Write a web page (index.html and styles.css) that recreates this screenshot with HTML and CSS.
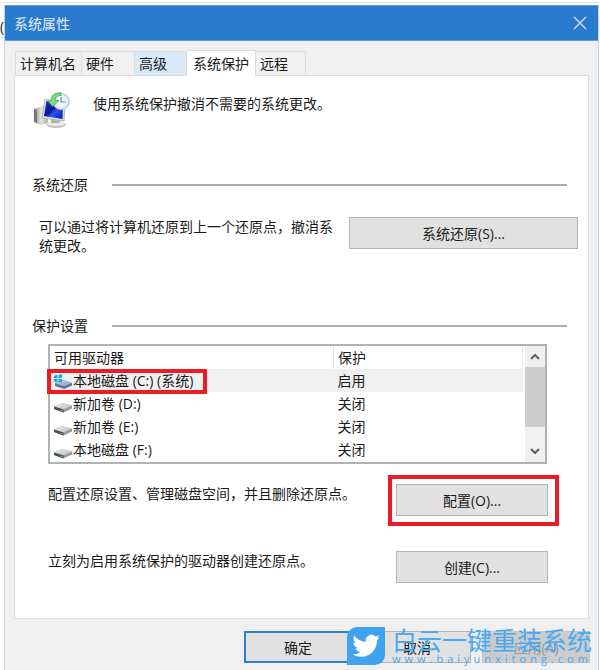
FILE: index.html
```html
<!DOCTYPE html>
<html lang="zh-CN">
<head>
<meta charset="utf-8">
<title>系统属性</title>
<link rel="stylesheet" href="styles.css">
</head>
<body>
<svg class="defs" width="0" height="0" aria-hidden="true">
  <defs>
    <linearGradient id="disk-top" x1="0" y1="0" x2="1" y2="1"><stop offset="0" stop-color="#ececec"/><stop offset="1" stop-color="#bdbdbd"/></linearGradient>
    <linearGradient id="disk-blue" x1="0" y1="0" x2="1" y2="1"><stop offset="0" stop-color="#c3d6ea"/><stop offset="1" stop-color="#7f9dc0"/></linearGradient>
    <symbol id="disk" viewBox="0 0 18 16">
      <path d="M0 9.500 8 6 18 8.500V11.500L9.500 15.500 0 12z" fill="#9a9a9a"/>
      <path d="M0 9.500 8 6 18 8.500 9.500 12.500z" fill="url(#disk-top)"/>
      <path d="M0 9.500 9.500 12.500V15.500L0 12z" fill="#4a504c"/>
      <path d="M6.500 12.700l2 .6v1l-2-.6z" fill="#5fc46a"/>
    </symbol>
  </defs>
</svg>
<div class="page">
  <div class="behind" aria-hidden="true"><span>(</span></div>
  <main class="window">
    <header class="titlebar">
      <h1>系统属性</h1>
      <button class="close" type="button" aria-label="关闭窗口">
        <svg width="14" height="14" viewBox="0 0 14 14"><path d="M1 1l12 12M13 1L1 13" stroke="#d5e5f6" stroke-width="1.300" fill="none"/></svg>
      </button>
    </header>
    <div class="content">
      <div class="tabs" role="tablist">
        <button class="tab name" type="button" role="tab">计算机名</button>
        <button class="tab hardware" type="button" role="tab">硬件</button>
        <button class="tab hover" type="button" role="tab">高级</button>
        <button class="tab active" type="button" role="tab" aria-selected="true">系统保护</button>
        <button class="tab remote" type="button" role="tab">远程</button>
      </div>
      <section class="panel">
        <div class="intro">
          <svg width="38" height="38" viewBox="0 0 38 38" aria-hidden="true">
            <defs>
              <linearGradient id="screen" x1="0" y1="0" x2="1" y2="1"><stop offset="0" stop-color="#1c35e0"/><stop offset=".45" stop-color="#0713a0"/><stop offset=".6" stop-color="#2c55e8"/><stop offset="1" stop-color="#0615a8"/></linearGradient>
              <linearGradient id="case" x1="0" y1="0" x2="1" y2="0"><stop offset="0" stop-color="#8c8c8c"/><stop offset=".5" stop-color="#e2e2e2"/><stop offset="1" stop-color="#b0b0b0"/></linearGradient>
            </defs>
            <path d="M0 17 8 14 14 15V31L7 33 0 30z" fill="url(#case)"/>
            <path d="M0 18 3 18V31L0 30z" fill="#777"/>
            <ellipse cx="22" cy="32.500" rx="10" ry="3.500" fill="#c4c4c4"/>
            <ellipse cx="22" cy="31.500" rx="9" ry="2.500" fill="#ececec"/>
            <path d="M17 26h9v5h-9z" fill="#b3b3b3"/>
            <path d="M11 7 31 12 30 29 8 26z" fill="#d7dade" stroke="#b6babf"/>
            <path d="M12.500 9 29 13 28.500 27 10 24z" fill="url(#screen)"/>
            <circle cx="27" cy="9.500" r="8" fill="#dfeaf1" stroke="#b3c0c8" stroke-width="1.200"/>
            <circle cx="27" cy="9.500" r="5.800" fill="#edf5fa"/>
            <path d="M27 5v5h4.500" fill="none" stroke="#6d8fa8" stroke-width="1.200"/>
            <path d="M27 .8C20 .5 17 4 17 8.500L14 9 18.500 14.500 25 8.500 21 8.500C21 5.500 23 3.500 27 3.500z" fill="#82dc7c" stroke="#40a64a" stroke-width=".8"/>
          </svg>
          <p>使用系统保护撤消不需要的系统更改。</p>
        </div>
        <h2 class="heading">系统还原</h2>
        <div class="restore">
          <p>可以通过将计算机还原到上一个还原点，撤消系统更改。</p>
          <button class="btn wide" type="button">系统还原(S)...</button>
        </div>
        <h2 class="heading">保护设置</h2>
        <div class="list">
          <table>
            <thead><tr><th>可用驱动器</th><th class="state">保护</th></tr></thead>
            <tbody>
              <tr class="selected"><td><span class="drive marked"><svg width="18" height="16" viewBox="0 0 18 16" aria-hidden="true"><path d="M1 9 9 6 18 9 18 11.500 10 15 1 12z" fill="#5b7290"/><path d="M1 9 9 6 18 9 10 12.500z" fill="url(#disk-blue)"/><path d="M0 1.500 3.500 1V4H0zM4.500 .8 8 .3V4H4.500zM0 5h3.500v3L0 7.500zM4.500 5H8v3.600L4.500 8.100z" fill="#12a9ee"/></svg>本地磁盘 (C:) (系统)</span></td><td>启用</td></tr>
              <tr><td><span class="drive"><svg width="18" height="16" aria-hidden="true"><use href="#disk"/></svg>新加卷 (D:)</span></td><td>关闭</td></tr>
              <tr><td><span class="drive"><svg width="18" height="16" aria-hidden="true"><use href="#disk"/></svg>新加卷 (E:)</span></td><td>关闭</td></tr>
              <tr><td><span class="drive"><svg width="18" height="16" aria-hidden="true"><use href="#disk"/></svg>本地磁盘 (F:)</span></td><td>关闭</td></tr>
            </tbody>
          </table>
          <div class="scroll">
            <button type="button" aria-label="向上滚动"><svg width="10" height="7" viewBox="0 0 10 7"><path d="M1 6l4-4 4 4" fill="none" stroke="#606060" stroke-width="2"/></svg></button>
            <div class="thumb"></div>
            <button type="button" aria-label="向下滚动"><svg width="10" height="7" viewBox="0 0 10 7"><path d="M1 1l4 4 4-4" fill="none" stroke="#606060" stroke-width="2"/></svg></button>
          </div>
        </div>
        <div class="action">
          <p>配置还原设置、管理磁盘空间，并且删除还原点。</p>
          <button class="btn marked" type="button">配置(O)...</button>
        </div>
        <div class="action">
          <p>立刻为启用系统保护的驱动器创建还原点。</p>
          <button class="btn" type="button">创建(C)...</button>
        </div>
      </section>
      <footer class="footer">
        <button class="btn primary" type="button">确定</button>
        <button class="btn" type="button">取消</button>
        <button class="btn" type="button" disabled>应用(A)</button>
        <div class="brand">
          <svg width="38" height="38" viewBox="0 0 38 38" aria-hidden="true">
            <path d="M10 0H38V28a10 10 0 0 1-10 10H0V10A10 10 0 0 1 10 0z" fill="#3fa3f0"/>
            <path transform="translate(4.500 4.500) scale(1.200)" fill="#fff" d="M23.600 4.900c-.8.400-1.700.6-2.700.8 1-.6 1.700-1.500 2-2.600-.9.500-1.900.9-2.900 1.100a4.700 4.700 0 0 0-8 4.300C8.100 8.300 4.600 6.400 2.300 3.500a4.700 4.700 0 0 0 1.400 6.200c-.8 0-1.500-.2-2.100-.6v.1c0 2.300 1.600 4.200 3.800 4.600-.7.200-1.400.2-2.100.1.600 1.800 2.300 3.200 4.300 3.200A9.400 9.400 0 0 1 .7 19a13.200 13.200 0 0 0 7.200 2.100c8.600 0 13.600-7.300 13.300-13.800.9-.6 1.700-1.500 2.400-2.400z"/>
          </svg>
          <div>
            <strong>白云一键重装系统</strong>
            <span class="url">www.baiyunxitong.com</span>
          </div>
        </div>
      </footer>
    </div>
  </main>
</div>
</body>
</html>
```

FILE: styles.css
```css
* { box-sizing: border-box; }

body {
  margin: 0;
  background: #fff;
  color: #1a1a1a;
  font: 14px/19px "Open Sans", "Noto Sans CJK SC", sans-serif;
}

h1, h2, p { margin: 0; font-size: inherit; font-weight: 400; }

button { font: inherit; color: inherit; padding: 0; }

.defs { position: absolute; }

.page {
  position: relative;
  display: flex;
  min-height: 100vh;
  padding: 5px 1px 0 4px;
}

.behind {
  position: absolute;
  inset: 2px 0 auto 0;
  height: 36px;
  padding-top: 14px;
  border: solid #e4e4e4;
  border-width: 1px 0;
}

.window {
  position: relative;
  display: flex;
  flex: 1;
  flex-direction: column;
  min-width: 0;
  border: solid #bcd3ea;
  border-width: 0 1px;
  background: #f0f0f0;
}

.titlebar {
  display: flex;
  align-items: center;
  justify-content: space-between;
  height: 36px;
  padding: 0 11px 0 9px;
  border: solid #5b9bdd;
  border-width: 1px 0;
  background: #2a7ace;
  color: #e4eefa;
}

.close {
  display: flex;
  border: 0;
  background: none;
}

.content {
  flex: 1;
  padding: 9px 9px 7px;
}

.tabs {
  position: relative;
  display: flex;
  align-items: flex-end;
  height: 26px;
  margin-bottom: -1px;
}

.tab {
  height: 25px;
  padding: 0 4px;
  border: 1px solid #dcdcdc;
  border-left-width: 0;
  background: #f0f0f0;
  text-align: left;
  white-space: nowrap;
}

.tab.name { width: 67px; margin-left: 1px; border-left-width: 1px; }
.tab.hardware { width: 53px; }
.tab.hover { width: 52px; background: #d8e9f8; }
.tab.active {
  width: 69px;
  height: 26px;
  padding: 0 6px;
  border-bottom: 0;
  background: #fff;
}
.tab.remote { width: 50px; }

.panel {
  padding: 16px 10px 35px 17px;
  border: 1px solid #dcdcdc;
  background: #fff;
}

.intro {
  display: flex;
  gap: 21px;
  padding-left: 2px;
  margin-bottom: 45px;
}

.intro p { padding-top: 2px; }

.heading {
  display: flex;
  align-items: center;
  gap: 24px;
  padding-right: 11px;
}

.heading::after {
  content: "";
  flex: 1;
  height: 2px;
  background: #adadad;
}

.restore {
  display: flex;
  gap: 7px;
  padding-left: 7px;
  margin: 23px 0 61px;
}

.restore p { flex: 1; }

.btn {
  flex: none;
  width: 152px;
  height: 32px;
  border: 1px solid #b4b4b4;
  background: #e1e1e1;
  text-align: center;
}

.btn.wide { width: 229px; }

.list {
  display: flex;
  gap: 2px;
  height: 120px;
  margin: 9px 31px 20px 16px;
  border: 2px solid #b0b2b9;
}

table {
  flex: 1;
  align-self: flex-start;
  border-collapse: collapse;
  table-layout: fixed;
}

th, td {
  height: 23px;
  padding: 0 4px;
  font-weight: 400;
  text-align: left;
  white-space: nowrap;
}

.state { width: 40%; border: solid #e5e5e5; border-width: 0 1px; }

.selected { background: #f0f0f0; }

.drive {
  position: relative;
  display: flex;
  align-items: center;
  gap: 1px;
  width: fit-content;
}

.drive svg { align-self: flex-end; }

.drive.marked::after,
.btn.marked::after {
  content: "";
  position: absolute;
  border: 4px solid #ed1c24;
}

.drive.marked::after { inset: -2px -14px -4px -7px; }
.btn.marked { position: relative; }
.btn.marked::after { inset: -10px -12px -11px -9px; }

.scroll {
  display: flex;
  flex-direction: column;
  width: 20px;
  background: #f0f0f0;
}

.scroll button {
  display: flex;
  align-items: center;
  justify-content: center;
  height: 21px;
  border: 0;
  background: none;
}

.scroll .thumb {
  height: 60px;
  margin-bottom: auto;
  background: #cdcdcd;
}

.action {
  display: flex;
  justify-content: space-between;
  padding: 0 30px 0 16px;
}

.action + .action { margin-top: 35px; }

.footer {
  position: relative;
  display: flex;
  justify-content: flex-end;
  gap: 11px;
  margin: 12px -1px 0 0;
}

.footer .btn { width: 108px; }
.footer .primary { border: 2px solid #2883d5; }
.footer .btn:disabled { border-color: #c6c6c6; background: #ccc; color: #999; }

.brand {
  position: absolute;
  right: -2px;
  bottom: -2px;
  display: flex;
  gap: 7px;
  color: #4ba9ef;
}

.brand strong {
  display: block;
  font-size: 25px;
  font-weight: 400;
  line-height: 26px;
  white-space: nowrap;
}

.url {
  display: block;
  font-size: 11px;
  line-height: 12px;
  letter-spacing: 4px;
  white-space: nowrap;
}
```
